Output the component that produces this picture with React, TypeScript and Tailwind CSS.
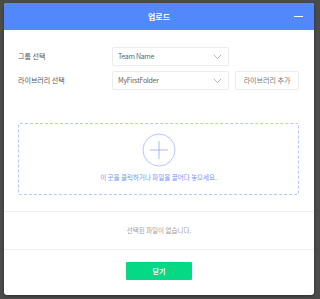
import React from "react";

const font = { fontFamily: '"Noto Sans CJK KR", "Noto Sans", sans-serif' };

function Chevron() {
  return (
    <svg width="9" height="6" viewBox="0 0 9 6" fill="none">
      <path d="M0.8 0.8 L4.5 4.6 L8.2 0.8" stroke="#9a9a9a" strokeWidth="0.7" />
    </svg>
  );
}

function Select({ value }: { value: string }) {
  return (
    <div className="w-[117px] h-[19px] border border-[#ececec] rounded-[2px] flex items-center justify-between pl-[5px] pr-[6px]">
      <span className="text-[7px] text-[#666] tracking-[-0.3px]">{value}</span>
      <Chevron />
    </div>
  );
}

export default function App() {
  return (
    <div className="w-[320px] h-[299px] bg-[#4b4b4b] pt-[3px] pl-[4px]" style={font}>
      <div className="w-[310px] h-[292px] bg-white rounded-[3px] overflow-hidden flex flex-col shadow-[0_1px_3px_rgba(0,0,0,0.4)]">
        <div className="h-[27px] bg-[#5288fb] relative flex items-center justify-center">
          <span className="text-[8px] font-bold text-white">업로드</span>
          <div className="absolute right-[11px] top-[13px] w-[9px] h-[1px] bg-white" />
        </div>
        <div className="pt-[17px] pl-[14px] pr-[15px] flex flex-col gap-[5px]">
          <div className="flex items-center">
            <span className="w-[94px] text-[7px] text-[#555]">그룹 선택</span>
            <Select value="Team Name" />
          </div>
          <div className="flex items-center">
            <span className="w-[94px] text-[7px] text-[#555]">라이브러리 선택</span>
            <Select value="MyFirstFolder" />
            <div className="ml-[6px] w-[64px] h-[19px] border border-[#ececec] rounded-[2px] flex items-center justify-center text-[7px] text-[#777]">
              라이브러리 추가
            </div>
          </div>
        </div>
        <div className="mt-[33px] mx-[14px] mr-[15px] h-[72px] border border-dashed border-[#b5c8fc] rounded-[2px] flex flex-col items-center pt-[9px]">
          <svg width="34" height="34" viewBox="0 0 34 34" fill="none">
            <circle cx="17" cy="17" r="16" stroke="#a3b8fb" strokeWidth="0.8" />
            <path d="M17 8 V26 M8 17 H26" stroke="#8aa6fb" strokeWidth="0.8" />
          </svg>
          <span className="mt-[6px] text-[6.5px] text-[#7494fa]">이 곳을 클릭하거나 파일을 끌어다 놓으세요.</span>
        </div>
        <div className="mt-[16px] border-t border-[#efefef] h-[38px] flex items-center justify-center">
          <span className="text-[6.5px] text-[#a0a0a0]">선택된 파일이 없습니다.</span>
        </div>
        <div className="border-t border-[#efefef] flex justify-center pt-[12px]">
          <div className="w-[66px] h-[18px] bg-[#06d985] rounded-[1px] flex items-center justify-center text-[7px] font-bold text-white">
            닫기
          </div>
        </div>
      </div>
    </div>
  );
}
